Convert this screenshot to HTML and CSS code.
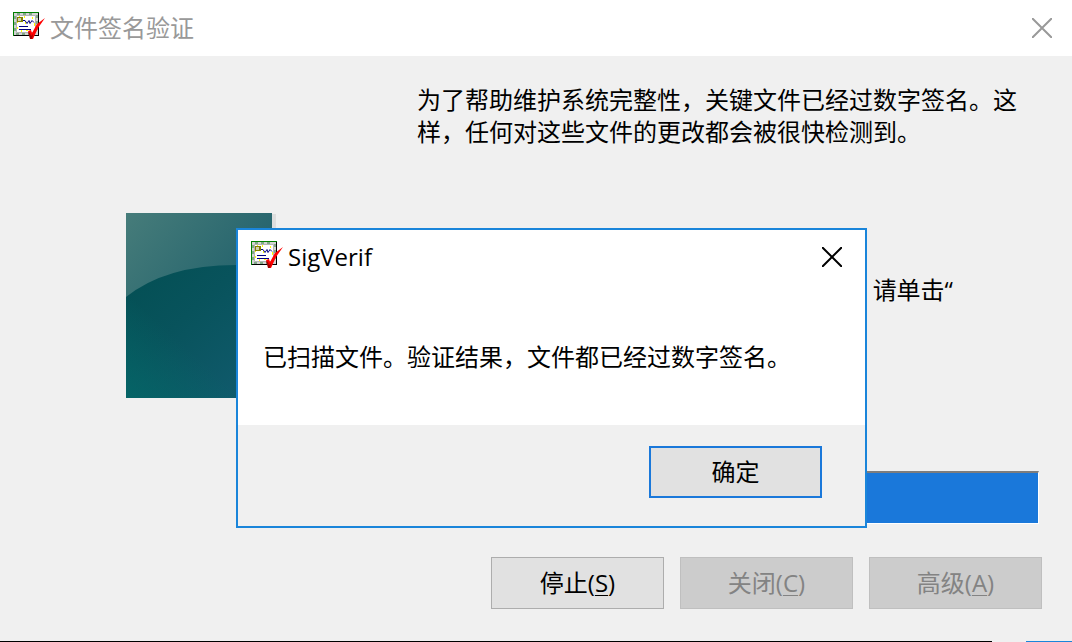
FILE: index.html
```html
<!DOCTYPE html>
<html lang="zh-CN">
<head>
<meta charset="UTF-8">
<meta name="viewport" content="width=device-width, initial-scale=1.0">
<title>文件签名验证</title>
<link rel="stylesheet" href="styles.css">
</head>
<body>

<svg class="defs" aria-hidden="true">
    <symbol id="cert" viewBox="0 0 32 28">
        <path d="M0 0h26v24H0z" fill="#008000"/>
        <path d="M25 1h1v23H1v-1h24z" fill="#000"/>
        <path d="M1 1h24v22H1z" fill="#d4d4d4"/>
        <path d="M4 2h18M3 22h18" stroke="#2f7f3a" stroke-dasharray="3 3" fill="none"/>
        <path d="M2 4v17M24 3v17" stroke="#2f7f3a" stroke-dasharray="3 3" fill="none"/>
        <path d="M3.5 3.5h19v17h-19z" fill="#fff" stroke="#b4b4b4"/>
        <path d="M4 9h1v2H4zM6 4h1v1H6zM11 4h1v2h-1zM12 10h1v2h-1zM19 5h1v2h-1zM21 11h1v3h-1zM4 15h1v2H4zM8 18h1v2H8zM13 18h2v1h-2z" fill="#ff0"/>
        <path d="M4 5h6v5H4z" fill="#808000"/>
        <path d="M5 6h3v3H5z" fill="#d0d0b0"/>
        <path d="M10 8.5h2l2 3 2-3 1 3 2-3 2 2M6 14.5h9M6 17.5h12" stroke="#000080" fill="none"/>
        <path d="M15 19l3-1 1 3 5-9 8-6-7 10-5 11h-2z" fill="#f00"/>
        <path d="M15 20l2 1 1 3 2-2-1 5h-2z" fill="#a00000"/>
    </symbol>
    <symbol id="cross" viewBox="0 0 20 20">
        <path d="M0 0l20 20M20 0L0 20" stroke="currentColor" stroke-width="2"/>
    </symbol>
</svg>

<main class="window">
    <header class="titlebar">
        <svg class="icon"><use href="#cert"/></svg>
        <h1 class="title">文件签名验证</h1>
        <button class="close" aria-label="关闭窗口"><svg><use href="#cross"/></svg></button>
    </header>

    <section class="content">
        <svg class="picture" viewBox="0 0 150 186" preserveAspectRatio="none" aria-hidden="true">
            <defs>
                <linearGradient id="top" x1="0" y1="0" x2="1" y2="1">
                    <stop offset="0" stop-color="#467c7a"/>
                    <stop offset="1" stop-color="#0e5364"/>
                </linearGradient>
                <linearGradient id="base" x1="0" y1="0" x2="1" y2="1">
                    <stop offset="0" stop-color="#034f53"/>
                    <stop offset="0.4" stop-color="#08535c"/>
                    <stop offset="1" stop-color="#125c70"/>
                </linearGradient>
                <linearGradient id="glow" x1="0" y1="1" x2="0.4" y2="0.6">
                    <stop offset="0" stop-color="#046868" stop-opacity="0.8"/>
                    <stop offset="1" stop-color="#046868" stop-opacity="0"/>
                </linearGradient>
            </defs>
            <path d="M146 1h4v185h-4z" fill="#dedede"/>
            <path d="M0 0h146v185H0z" fill="url(#top)"/>
            <path d="M0 84Q40 52 110 52h36v133H0z" fill="url(#base)"/>
            <path d="M0 84Q40 52 110 52h36v133H0z" fill="url(#glow)"/>
        </svg>
        <div class="info">
            <p>为了帮助维护系统完整性，关键文件已经过数字签名。这样，任何对这些文件的更改都会被很快检测到。</p>
            <p class="hint">请单击“</p>
            <div class="progress" role="progressbar" aria-label="扫描进度" aria-valuenow="100" aria-valuemin="0" aria-valuemax="100"></div>
        </div>
    </section>

    <footer class="actions">
        <button class="btn">停止(<u>S</u>)</button>
        <button class="btn" disabled>关闭(<u>C</u>)</button>
        <button class="btn" disabled>高级(<u>A</u>)</button>
    </footer>
    <div class="edge"></div>
</main>

<div class="dialog" role="dialog" aria-labelledby="dialog-title">
    <header class="titlebar">
        <svg class="icon"><use href="#cert"/></svg>
        <h2 class="title" id="dialog-title">SigVerif</h2>
        <button class="close" aria-label="关闭对话框"><svg><use href="#cross"/></svg></button>
    </header>
    <p class="message">已扫描文件。验证结果，文件都已经过数字签名。</p>
    <footer class="dialog-actions">
        <button class="btn primary">确定</button>
    </footer>
</div>

</body>
</html>
```
FILE: styles.css
```css
* {
    box-sizing: border-box;
}

body {
    margin: 0;
    font-family: "Open Sans", "Noto Sans CJK SC", sans-serif;
    font-size: 24px;
    line-height: 32px;
    color: #000;
    background: #f0f0f0;
}

p {
    margin: 0;
}

.defs {
    position: absolute;
    width: 0;
    height: 0;
}

.window {
    display: flex;
    flex-direction: column;
    min-height: 100vh;
}

.titlebar {
    display: flex;
    align-items: center;
    height: 56px;
    padding: 0 20px 0 13px;
    background: #fff;
    color: #999;
}

.icon {
    width: 32px;
    height: 28px;
    margin-bottom: 4px;
}

.title {
    margin: 0 auto 0 5px;
    font-size: 24px;
    font-weight: normal;
}

.close {
    display: flex;
    padding: 0;
    border: none;
    background: none;
    color: inherit;
}

.close svg {
    width: 20px;
    height: 20px;
}

.content {
    display: flex;
    flex: 1;
    padding: 28px 33px 0 126px;
}

.picture {
    flex: none;
    width: 150px;
    height: 186px;
    margin-top: 129px;
}

.info {
    display: flex;
    flex: 1;
    flex-direction: column;
    margin-left: 141px;
}

.hint {
    margin: 126px 86px 0 auto;
}

.progress {
    height: 53px;
    margin-top: auto;
    border: 1px solid #fff;
    border-top: 2px solid #7d7d7d;
    background: #1a78da;
}

.actions {
    display: flex;
    justify-content: flex-end;
    gap: 16px;
    padding: 33px 30px 32px;
}

.btn {
    width: 173px;
    height: 52px;
    padding: 0;
    border: 1px solid #adadad;
    background: #e1e1e1;
    color: #000;
    font: inherit;
}

.btn:disabled {
    border-color: #bfbfbf;
    background: #ccc;
    color: #838383;
}

.btn.primary {
    border: 2px solid #1a78da;
}

.btn u {
    text-decoration-thickness: 1px;
    text-underline-offset: 3px;
}

.edge {
    height: 1px;
    background: linear-gradient(to right, #000 calc(100% - 80px), #f0f0f0 calc(100% - 80px), #f0f0f0 calc(100% - 46px), #1a85da calc(100% - 46px));
}

/* message box floats over the main window */
.dialog {
    position: absolute;
    top: 228px;
    left: 236px;
    width: 631px;
    border: 2px solid #1a85da;
    background: #fff;
}

.dialog .titlebar {
    height: 54px;
    padding-right: 23px;
    color: #000;
}

.message {
    padding: 57px 25px 52px;
}

.dialog-actions {
    display: flex;
    justify-content: flex-end;
    padding: 21px 43px 28px;
    background: #f0f0f0;
}
```
